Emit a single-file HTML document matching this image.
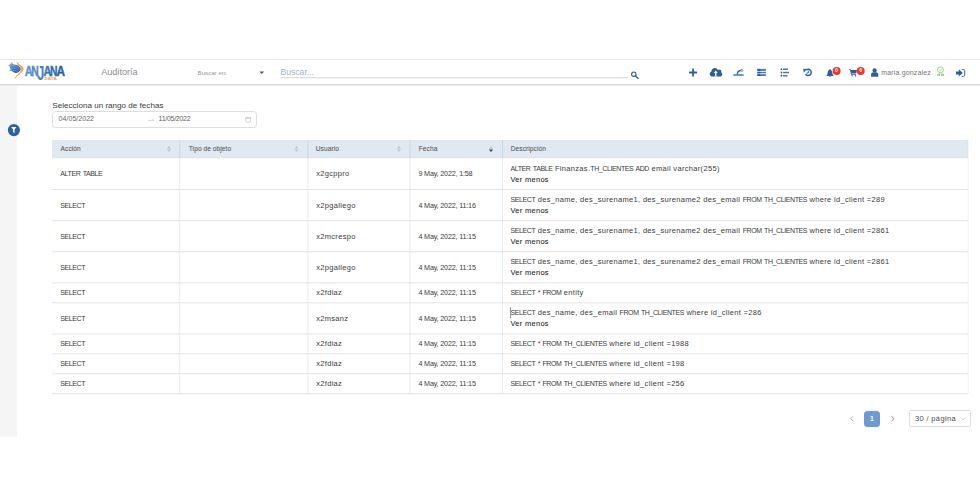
<!DOCTYPE html>
<html lang="es">
<head>
<meta charset="utf-8">
<title>Auditoría</title>
<style>
*{box-sizing:border-box;margin:0;padding:0}
html,body{width:980px;height:500px;overflow:hidden;background:#fff}
body{font-family:"Liberation Sans",sans-serif;color:#3c3c3c;position:relative}
.abs{position:absolute;white-space:nowrap}
svg{position:absolute;overflow:visible}
#hdr{position:absolute;left:0;top:59px;width:980px;height:26px;background:#fff;border-top:1px solid #e8e8e8;border-bottom:1px solid #d6d6d6;box-shadow:0 1px 1px rgba(0,0,0,.07)}
#side{position:absolute;left:0;top:86px;width:17px;height:351px;background:#f5f5f5}
#title{left:101.2px;top:66.5px;font-size:9.1px;line-height:11px;color:#8e8e8e}
#ben{left:197.5px;top:68.9px;font-size:6.2px;line-height:8px;color:#979797}
#caret{display:none}
#bus{left:280.4px;top:66.9px;font-size:8.6px;line-height:11px;color:#9db3ca;letter-spacing:.02px}
#uline{display:none}
#user{left:881.2px;top:67.6px;font-size:7px;line-height:9px;color:#757575;letter-spacing:.17px}
.badge{position:absolute;width:7.8px;height:7.8px;border-radius:50%;background:#ea3a30;color:#fff;font-size:5px;font-weight:bold;line-height:7.8px;text-align:center}
#lbl{left:52.3px;top:100.8px;font-size:8.1px;line-height:10px;color:#3a3a3a}
#date{left:52px;top:111px;width:205px;height:17px;border:1px solid #dedede;border-radius:3.5px;background:#fff}
.dt{font-size:7px;line-height:9px;color:#666;top:114px}
table{position:absolute;left:52.3px;top:140px;width:916px;border-collapse:collapse;table-layout:fixed;font-size:7.5px;letter-spacing:.32px}
th{height:18.45px;background:#e0e8f2;text-align:left;font-weight:normal;font-size:6.6px;letter-spacing:.06px;color:#4a4a4a;padding:0 0 1.5px 8.3px;position:relative}
td{padding:0 0 0 8px;vertical-align:middle;line-height:11.25px;color:#3a3a3a;white-space:nowrap}
td:nth-child(3){padding-left:8.7px}
tr.r2 td{height:31.13px}
tr.r1 td{height:19.9px}
.u{font-size:7px;letter-spacing:-.4px;word-spacing:.9px}
td.a{font-size:7px;letter-spacing:-.4px;word-spacing:.9px}
td.d{font-size:7.2px;letter-spacing:-.18px}
.vm{color:#1c1c1c;letter-spacing:.28px;-webkit-text-stroke:.06px #1c1c1c}
.sort{position:absolute;left:0;top:0}
#pg1{left:864px;top:410.7px;width:16px;height:16.2px;border-radius:3.5px;background:#6b9bd0;color:#fff;font-size:7px;font-weight:bold;line-height:16.2px;text-align:center}
#psel{left:909.3px;top:410.4px;width:62.2px;height:16.4px;border:1px solid #dcdcdc;border-radius:1.5px}
#ptxt{left:915px;top:413.6px;font-size:7.5px;line-height:10px;color:#4a4a4a;letter-spacing:.35px}
</style>
</head>
<body>
<div id="hdr"></div>
<div id="side"></div>

<!-- logo -->
<svg id="logo" style="left:0;top:59px" width="80" height="26" viewBox="0 59 80 26">
<defs>
<linearGradient id="lg" x1="0" x2="1" y1="0" y2="0"><stop offset="0" stop-color="#5e97cf"/><stop offset="1" stop-color="#2b5fa0"/></linearGradient>
<linearGradient id="wg" x1="0" x2="1" y1="0" y2="1"><stop offset="0" stop-color="#8ab7e0"/><stop offset=".55" stop-color="#3f78b8"/><stop offset="1" stop-color="#25599b"/></linearGradient>
</defs>
<path d="M12.6 62.2 C11.4 62.6 10.6 63.4 10.4 64.6 C9.6 64.8 8.8 65 8.1 65.4 C8.8 65.7 9.4 66 9.7 66.5 C9.8 67.6 10.3 68.6 10.9 69.5 C10.3 69.9 9.7 70.2 9 70.4 C9.9 70.8 10.8 70.9 11.6 70.6 C12.4 71.8 13.6 72.7 15.2 73 C17.4 73.3 19.8 71.8 20.9 69 C20.3 67.2 18.8 65.6 16.6 65 C15 64.6 13.6 64.6 12.7 64 C12.2 63.5 12.2 62.8 12.6 62.2 Z" fill="url(#wg)"/>
<path d="M10.6 66 C13.4 65.6 16.8 66.4 19.8 68.4 M11.4 68.2 C14 68 17 68.8 19.6 70.2 M12.6 70.4 C14.6 70.4 16.6 70.8 18.4 71.6" stroke="#fff" stroke-opacity=".4" stroke-width=".4" fill="none"/>
<path d="M16.2 61.9 C17.4 62.3 18.3 63.2 19 64.3 C19.8 65.2 21.2 65.6 22.2 66.3 C23.2 67 23.7 68 23.5 69.3 C23.2 70.8 22.3 71.6 21.3 72.6 C19.8 74.2 18.6 75 17.5 75.9 C16.3 77 15.3 78.4 14.4 79.6 C14.6 78.2 15.4 76.8 16.6 75.6 C18 74.2 19.6 72.8 20.4 71.2 C21 69.8 21 68.6 20.4 67.4 C19.6 66.2 18.4 65.4 17.6 64.4 C17 63.6 16.6 62.8 16.2 61.9 Z" fill="#f0a352"/>
<g font-family="Liberation Sans, sans-serif" font-weight="bold" font-size="14.4">
<text transform="translate(24.7 75.9) scale(.76 1)" fill="#5a93cc" stroke="#5a93cc" stroke-width=".45">A</text>
<text transform="translate(31.3 75.9) scale(.72 1)" fill="#4f89c4" stroke="#4f89c4" stroke-width=".45">N</text>
<text transform="translate(37.2 79.7) scale(.88 1.37)" fill="#4680bd">J</text>
<text transform="translate(43.6 75.9) scale(.76 1)" fill="#3c75b3" stroke="#3c75b3" stroke-width=".45">A</text>
<text transform="translate(50 75.9) scale(.72 1)" fill="#346cab" stroke="#346cab" stroke-width=".45">N</text>
<text transform="translate(56.4 75.9) scale(.82 1)" fill="#2d63a3" stroke="#2d63a3" stroke-width=".45">A</text>
</g>
<text transform="translate(44.3 79.9) scale(1.2 1)" font-family="Liberation Sans, sans-serif" font-weight="bold" font-size="4" fill="#f0a04c">DATA</text>
</svg>

<div class="abs" id="title">Auditoría</div>
<div class="abs" id="ben">Buscar en:</div>
<div class="abs" id="caret"></div>
<div class="abs" id="bus">Buscar...</div>
<div class="abs" id="uline"></div>

<!-- header icons -->
<svg id="icons" style="left:0;top:59px" width="980" height="26" viewBox="0 59 980 26" fill="#2d5f9b" stroke="none">
<path d="M259.4 71.5 H264.2 L261.8 73.9 Z" fill="#5a5a5a" stroke="none"/>
<path d="M280.4 77.8 H627.8" stroke="#d4d4d4" stroke-width="1.1" fill="none"/>
<!-- search -->
<circle cx="633.8" cy="74.2" r="2.2" fill="none" stroke="#2d5f9b" stroke-width="1.1"/>
<path d="M635.5 76 L638.2 78.4" stroke="#2d5f9b" stroke-width="1.4" stroke-linecap="round"/>
<!-- plus -->
<path d="M689.8 72.5 H696.3 M693.05 69.2 V75.8" stroke="#2d5f9b" stroke-width="1.8" stroke-linecap="round"/>
<!-- cloud upload -->
<path d="M712.5 76.5 C710.9 76.5 709.7 75.4 709.7 73.9 C709.7 72.8 710.4 71.8 711.4 71.4 C711.4 69.5 712.9 68 714.8 68 C716.2 68 717.4 68.8 717.9 70.1 C718.3 69.7 718.8 69.5 719.3 69.5 C720.5 69.5 721.4 70.4 721.4 71.6 C721.4 71.9 721.3 72.2 721.2 72.4 C721.9 72.8 722.3 73.6 722.3 74.4 C722.3 75.6 721.3 76.5 720.1 76.5 Z"/>
<path d="M715.8 70.6 L717.8 72.9 H716.5 V76.5 H715.1 V72.9 H713.8 Z" fill="#fff"/>
<!-- bezier / signature -->
<path d="M733.6 75 H743.4" stroke="#5f88b8" stroke-width="1.7" fill="none"/>
<path d="M732.9 75 L734.3 73.9 V76.1 Z M744 75 L742.6 73.9 V76.1 Z" fill="#5f88b8"/>
<path d="M737.2 74.6 C737.4 72 738.6 70.5 740.8 70.5" stroke="#2d5f9b" stroke-width="1.3" fill="none"/>
<circle cx="741.8" cy="70.4" r="1" fill="#fff" stroke="#2d5f9b" stroke-width=".7"/>
<!-- list -->
<rect x="757.4" y="68.9" width="8.5" height="2" fill="#4a78ad"/><rect x="757.4" y="71.8" width="8.5" height="1.5" fill="#4a78ad"/><rect x="757.4" y="74.2" width="8.5" height="1.8" fill="#4a78ad"/>
<rect x="757.4" y="68.9" width="2.8" height="2"/><rect x="757.4" y="71.8" width="2.8" height="1.5"/><rect x="757.4" y="74.2" width="2.8" height="1.8"/>
<!-- tasks -->
<path d="M781.4 69 V76" stroke="#2d5f9b" stroke-opacity=".35" stroke-width=".6"/>
<circle cx="781.4" cy="69.2" r=".85"/><circle cx="781.4" cy="72.6" r=".85"/><circle cx="781.4" cy="75.7" r=".85"/>
<g fill="#4c7aaf"><rect x="783" y="68.5" width="4.9" height="1.5"/><rect x="783" y="71.8" width="6" height="1.5"/><rect x="783" y="75" width="4.5" height="1.5"/></g>
<!-- history -->
<path d="M806.3 69.9 A3.1 3.1 0 1 1 805.6 74.2" fill="none" stroke="#2d5f9b" stroke-width="1.5"/>
<path d="M803.3 68.7 L807.2 69.1 L803.7 72.4 Z"/>
<path d="M808.3 70.6 V73 H806.5" fill="none" stroke="#2d5f9b" stroke-width="1"/>
<!-- bell -->
<path d="M830 69 C830.4 69 830.6 69.3 830.6 69.7 C831.7 70.1 832.2 71.2 832.3 72.6 C832.4 74 832.8 74.8 833.4 75.3 V75.9 H826.6 V75.3 C827.2 74.8 827.6 74 827.7 72.6 C827.8 71.2 828.3 70.1 829.4 69.7 C829.4 69.3 829.6 69 830 69 Z"/>
<path d="M829.1 76.2 H830.9 C830.9 76.7 830.5 77 830 77 C829.5 77 829.1 76.7 829.1 76.2 Z"/>
<!-- cart -->
<path d="M848.9 69.2 H850.5 L850.8 70.1 H857 L856.2 73.4 H851.5 L851.7 74.1 H856 V74.8 H851.1 L850 69.9 H848.9 Z"/>
<circle cx="852.1" cy="75.8" r=".7"/><circle cx="855.4" cy="75.8" r=".7"/>
<!-- user -->
<circle cx="874.6" cy="70.4" r="2.15"/>
<path d="M871.1 76.7 V74.6 C871.1 73.2 872 72.3 873.4 72.3 H875.9 C877.3 72.3 878.3 73.2 878.3 74.6 V76.7 Z"/>
<!-- cert green -->
<g fill="none" stroke="#93cd74" stroke-width=".9">
<circle cx="940.5" cy="69.8" r="2.9"/>
<path d="M939.3 69.8 L940.2 70.7 L941.8 68.9" stroke-width=".8"/>
<path d="M939.4 72.6 L938.8 74 M941.6 72.6 L942.2 74" stroke-width=".8"/>
</g>
<path d="M937.3 73.9 H940.1 V76.1 L938.7 75.5 L937.3 76.1 Z M941.1 73.9 H943.9 V76.1 L942.5 75.5 L941.1 76.1 Z" fill="#93cd74"/>
<!-- sign in -->
<path d="M956 71.6 H958.8 V69.3 L962.8 73 L958.8 76.6 V74.4 H956 Z"/>
<path d="M961.8 69.6 H963.6 C964.3 69.6 964.7 70 964.7 70.7 V75.2 C964.7 75.9 964.3 76.3 963.6 76.3 H961.8" fill="none" stroke="#3b6ba5" stroke-width="1"/>
</svg>
<svg style="left:830px;top:65px" width="40" height="12" viewBox="830 65 40 12">
<circle cx="836.6" cy="70.9" r="4" fill="#ea3a30"/><circle cx="860.7" cy="70.9" r="4" fill="#ea3a30"/>
<g font-family="Liberation Sans, sans-serif" font-weight="bold" font-size="4.5" fill="#fff" text-anchor="middle"><text x="836.6" y="72.4">0</text><text x="860.7" y="72.4">0</text></g>
</svg>
<div class="abs" id="user">maria.gonzalez</div>

<!-- filter button -->
<svg style="left:6px;top:122px" width="16" height="16" viewBox="6 122 16 16">
<circle cx="13.9" cy="130.1" r="6.7" fill="#fff" opacity=".8"/>
<circle cx="13.9" cy="130.1" r="6.1" fill="#2c62a0"/>
<path d="M11.1 127 H16.5 L14.5 129.6 V133 L13.1 132.2 V129.6 Z" fill="#fff"/>
</svg>

<div class="abs" id="lbl">Selecciona un rango de fechas</div>
<div class="abs" id="date"></div>
<div class="abs dt" style="left:58.6px;letter-spacing:.04px">04/05/2022</div>
<div class="abs dt" style="left:158.6px;letter-spacing:-.28px">11/05/2022</div>
<svg style="left:147px;top:116px" width="110" height="8" viewBox="147 116 110 8" fill="none" stroke="#bdbdbd">
<path d="M148 120.4 H153.8 L152.2 119" stroke-width=".6"/>
<rect x="245.6" y="117.2" width="4.9" height="4.9" rx=".8" stroke-width=".6"/>
<path d="M245.6 118.4 H250.5" stroke-width=".8"/>
</svg>

<table>
<colgroup><col style="width:128.2px"><col style="width:127px"><col style="width:103px"><col style="width:92px"><col></colgroup>
<thead><tr><th>Acción</th><th>Tipo de objeto</th><th>Usuario</th><th>Fecha</th><th>Descripción</th></tr></thead>
<tbody>
<tr class="r2"><td class="a">ALTER TABLE</td><td></td><td>x2gcppro</td><td class="d">9 May, 2022, 1:58</td><td><span class="u">ALTER TABLE</span> Finanzas.<span class="u">TH_CLIENTES ADD</span> email varchar(255)<br><span class="vm">Ver menos</span></td></tr>
<tr class="r2"><td class="a">SELECT</td><td></td><td>x2pgallego</td><td class="d">4 May, 2022, 11:16</td><td><span class="u">SELECT</span> des_name, des_surename1, des_surename2 des_email <span class="u">FROM TH_CLIENTES</span> where id_client =289<br><span class="vm">Ver menos</span></td></tr>
<tr class="r2"><td class="a">SELECT</td><td></td><td>x2mcrespo</td><td class="d">4 May, 2022, 11:15</td><td><span class="u">SELECT</span> des_name, des_surename1, des_surename2 des_email <span class="u">FROM TH_CLIENTES</span> where id_client =2861<br><span class="vm">Ver menos</span></td></tr>
<tr class="r2"><td class="a">SELECT</td><td></td><td>x2pgallego</td><td class="d">4 May, 2022, 11:15</td><td><span class="u">SELECT</span> des_name, des_surename1, des_surename2 des_email <span class="u">FROM TH_CLIENTES</span> where id_client =2861<br><span class="vm">Ver menos</span></td></tr>
<tr class="r1"><td class="a">SELECT</td><td></td><td>x2fdiaz</td><td class="d">4 May, 2022, 11:15</td><td><span class="u">SELECT * FROM</span> entity</td></tr>
<tr class="r2"><td class="a">SELECT</td><td></td><td>x2msanz</td><td class="d">4 May, 2022, 11:15</td><td><span class="u">SELECT</span> des_name, des_email <span class="u">FROM TH_CLIENTES</span> where id_client =286<br><span class="vm">Ver menos</span></td></tr>
<tr class="r1"><td class="a">SELECT</td><td></td><td>x2fdiaz</td><td class="d">4 May, 2022, 11:15</td><td><span class="u">SELECT * FROM TH_CLIENTES</span> where id_client =1988</td></tr>
<tr class="r1"><td class="a">SELECT</td><td></td><td>x2fdiaz</td><td class="d">4 May, 2022, 11:15</td><td><span class="u">SELECT * FROM TH_CLIENTES</span> where id_client =198</td></tr>
<tr class="r1"><td class="a">SELECT</td><td></td><td>x2fdiaz</td><td class="d">4 May, 2022, 11:15</td><td><span class="u">SELECT * FROM TH_CLIENTES</span> where id_client =256</td></tr>
</tbody>
</table>

<!-- grid lines -->
<svg style="left:0;top:139px" width="980" height="257" viewBox="0 139 980 257" fill="none">
<g stroke="#000" stroke-opacity=".085" stroke-width="1">
<path d="M179.8 140 V394 M307.9 140 V394 M410 140 V394 M502.5 140 V394"/>
<path d="M968.2 140 V394" stroke-opacity=".06"/>
<path d="M971 140 V396" stroke-opacity=".015" stroke-width="1.5"/>
</g>
<g stroke="#e3e3e3" stroke-width="1">
<path d="M52.3 189.5 H968.3 M52.3 220.65 H968.3 M52.3 251.8 H968.3 M52.3 282.9 H968.3 M52.3 302.8 H968.3 M52.3 333.95 H968.3 M52.3 353.85 H968.3 M52.3 373.75 H968.3 M52.3 393.7 H968.3"/>
</g>
<path d="M52.3 158.2 H968.3" stroke="#000" stroke-opacity=".06" stroke-width=".8"/>
<path d="M510.5 307.9 V317.8 M509.9 307.9 H511.1 M509.9 317.8 H511.1" stroke="#6f6f6f" stroke-width=".7"/>
</svg>
<!-- sorters -->
<svg style="left:0;top:140px" width="980" height="19" viewBox="0 140 980 19">
<g fill="#c0c3c8">
<path d="M167.0 148.5 L169.0 145.9 L171.0 148.5 Z M167.0 149.4 L169.0 152 L171.0 149.4 Z"/>
<path d="M294.4 148.5 L296.4 145.9 L298.4 148.5 Z M294.4 149.4 L296.4 152 L298.4 149.4 Z"/>
<path d="M396.9 148.5 L398.9 145.9 L400.9 148.5 Z M396.9 149.4 L398.9 152 L400.9 149.4 Z"/>
<path d="M489.0 148.5 L491.0 145.9 L493.0 148.5 Z"/>
</g>
<path d="M489 149.4 L491 152 L493 149.4 Z" fill="#3a3a3a"/>
</svg>

<!-- pagination -->
<svg style="left:848px;top:410px" width="124" height="18" viewBox="848 410 124 18" fill="none">
<path d="M853.3 416.2 L850.6 418.7 L853.3 421.2" stroke="#9a9a9a" stroke-width=".8"/>
<path d="M891.4 416.2 L894.1 418.7 L891.4 421.2" stroke="#7a7a7a" stroke-width=".8"/>
<path d="M960.8 417.4 L963.2 420 L965.6 417.4" stroke="#c0c0c0" stroke-width=".7"/>
</svg>
<div class="abs" id="pg1">1</div>
<div class="abs" id="psel"></div>
<div class="abs" id="ptxt">30 / página</div>
</body>
</html>
